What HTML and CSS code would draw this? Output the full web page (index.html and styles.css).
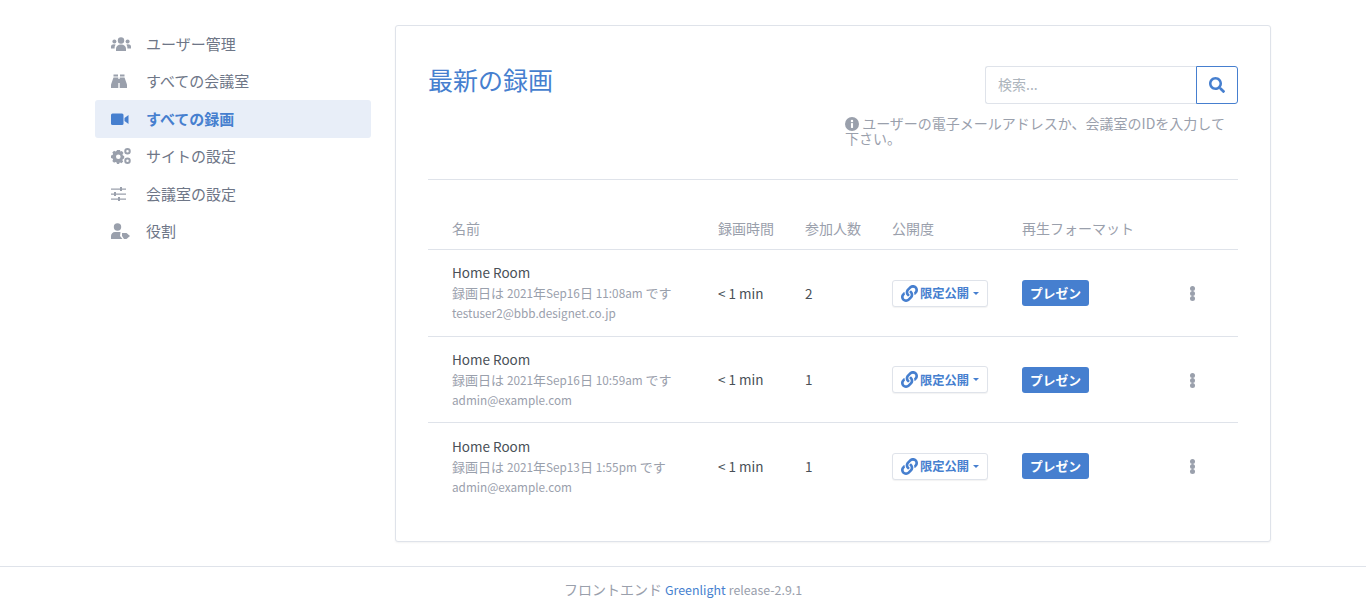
FILE: index.html
```html
<!DOCTYPE html>
<html lang="ja">
<head>
  <meta charset="UTF-8">
  <title>最新の録画</title>
  <link rel="stylesheet" href="styles.css">
</head>
<body>
  <svg class="sprite">
    <symbol id="link-icon" viewBox="0 0 512 512"><path d="M326.600 185.400c59.700 59.800 58.900 155.700.4 214.600l-.4.400-67.200 67.200c-59.300 59.300-155.700 59.300-215 0-59.300-59.300-59.300-155.700 0-215l37.100-37.100c9.800-9.800 26.800-3.300 27.300 10.600.6 17.700 3.800 35.500 9.700 52.700 2 5.800.6 12.300-3.800 16.600l-13.100 13.100c-28 28-28.900 73.700-1.200 102 28 28.500 74 28.700 102.200.5l67.200-67.200c28.200-28.200 28.100-73.800 0-101.800-3.700-3.700-7.400-6.600-10.300-8.600a16 16 0 0 1-6.900-12.600c-.4-10.600 3.400-21.500 11.700-29.800l21.100-21.100c5.500-5.500 14.200-6.200 20.600-1.700a152.500 152.500 0 0 1 20.500 17.200zM467.500 44.400c-59.300-59.300-155.700-59.300-215 0l-67.200 67.200-.4.400c-58.600 58.900-59.400 154.800.4 214.600a152.500 152.500 0 0 0 20.500 17.200c6.400 4.500 15.100 3.800 20.600-1.700l21.100-21.100c8.300-8.300 12.100-19.200 11.700-29.800a16 16 0 0 0-6.900-12.600c-2.900-2-6.600-4.900-10.300-8.600-28.100-28-28.200-73.600 0-101.800l67.200-67.200c28.200-28.200 74.200-28 102.200.5 27.700 28.300 26.800 74-1.200 102l-13.100 13.100c-4.400 4.300-5.800 10.800-3.800 16.600 5.900 17.200 9.100 35 9.700 52.700.5 13.900 17.500 20.400 27.300 10.600l37.100-37.100c59.300-59.300 59.300-155.700 0-215z"/></symbol>
  </svg>

  <div class="page">
    <nav class="sidebar">
      <a class="nav-item">
        <svg class="nav-icon" viewBox="0 0 20 16"><circle cx="10" cy="4.500" r="3.200"/><circle cx="3.400" cy="5.500" r="2"/><circle cx="16.600" cy="5.500" r="2"/><path d="M5 15v-2.500C5 10.500 7 8.500 10 8.500s5 2 5 4V15z"/><path d="M0 12.500v-2c0-1.500 1.500-2.200 3-2.200.8 0 1.300.2 1.800.5C3.900 9.500 3.600 10.500 3.600 12v.5z"/><path d="M20 12.500v-2c0-1.500-1.500-2.200-3-2.200-.8 0-1.300.2-1.800.5.900.7 1.200 1.700 1.200 3.200v.5z"/></svg>
        <span>ユーザー管理</span>
      </a>
      <a class="nav-item">
        <svg class="nav-icon" viewBox="0 0 20 16"><path d="M2.500 1.500H7v2H2.500zM9 1.500h4.500v2H9z"/><path d="M2.500 4.500H7.300V15H0v-3.500z"/><path d="M13.500 4.500H8.700V15H16v-3.500z"/><path d="M7 6h2v4H7z"/></svg>
        <span>すべての会議室</span>
      </a>
      <a class="nav-item active">
        <svg class="nav-icon" viewBox="0 0 20 16"><rect x="0" y="2.500" width="12.500" height="11.500" rx="1.500"/><path d="M13.500 7 17.500 4V13L13.500 10z"/></svg>
        <span>すべての録画</span>
      </a>
      <a class="nav-item">
        <svg class="nav-icon" viewBox="0 0 20 16"><path fill-rule="evenodd" d="M6 2h3l.4 1.500 1.500-.6 1.600 2-1 1.300.4 1.300 1.300.5v2.500l-1.300.5-.5 1.300.8 1.200-1.800 1.800-1.200-.8-1.200.5L8.500 16h-2.500l-.4-1.500-1.300-.5-1.200.8L1.300 13l.8-1.200-.5-1.300L0 10V7.500l1.600-.5.500-1.300-.8-1.200 1.800-1.800 1.200.8 1.200-.5zM7.300 6.500a2.300 2.300 0 1 0 0 4.600 2.300 2.300 0 0 0 0-4.600z"/><path fill-rule="evenodd" d="M16.500 0a3 3 0 1 1 0 6.500 3 3 0 0 1 0-6.500zm0 2a1.200 1.200 0 1 0 0 2.500 1.200 1.200 0 0 0 0-2.500z"/><path fill-rule="evenodd" d="M16.500 9.500a3 3 0 1 1 0 6.500 3 3 0 0 1 0-6.500zm0 2a1.200 1.200 0 1 0 0 2.500 1.200 1.200 0 0 0 0-2.500z"/></svg>
        <span>サイトの設定</span>
      </a>
      <a class="nav-item">
        <svg class="nav-icon" viewBox="0 0 20 16"><path d="M0 2.500h15v1.300H0zM0 7.500h15v1.300H0zM0 12.500h15v1.300H0z"/><path d="M9 1h2v4H9zM3 6h2v4H3zM7 11h2v4H7z"/></svg>
        <span>会議室の設定</span>
      </a>
      <a class="nav-item">
        <svg class="nav-icon" viewBox="0 0 20 16"><circle cx="6.500" cy="4" r="3.700"/><path d="M0 16v-3c0-2.200 1.800-4 4-4h5.500l-.5 4 2.500 3z"/><path d="M11 10h4.500l3.500 3-3.500 3H13l-2-3z"/></svg>
        <span>役割</span>
      </a>
    </nav>

    <main class="card">
      <div class="card-head">
        <h1 class="title">最新の録画</h1>
        <div class="search">
          <div class="search-box">
            <input class="search-input" type="text" placeholder="検索...">
            <button class="search-btn">
              <svg viewBox="0 0 512 512" width="16" height="16"><path fill="#467fcf" d="M505 442.700 405.300 343c-4.500-4.500-10.600-7-17-7H372c27.600-35.300 44-79.700 44-128C416 93.100 322.900 0 208 0S0 93.100 0 208s93.100 208 208 208c48.300 0 92.700-16.400 128-44v16.300c0 6.400 2.500 12.500 7 17l99.700 99.700c9.400 9.400 24.600 9.400 33.900 0l28.300-28.300c9.400-9.400 9.400-24.600.1-34zM208 336c-70.700 0-128-57.200-128-128 0-70.700 57.200-128 128-128 70.700 0 128 57.200 128 128 0 70.700-57.200 128-128 128z"/></svg>
            </button>
          </div>
          <p class="search-note">
            <svg viewBox="0 0 16 16" width="14" height="14"><circle cx="8" cy="8" r="8" fill="#9aa0ac"/><rect x="6.800" y="7" width="2.400" height="5.500" fill="#fff"/><circle cx="8" cy="4.600" r="1.400" fill="#fff"/></svg>
            ユーザーの電子メールアドレスか、会議室のIDを入力して下さい。
          </p>
        </div>
      </div>

      <hr class="divider">

      <table class="recordings">
        <thead>
          <tr>
            <th class="col-name">名前</th>
            <th class="col-time">録画時間</th>
            <th class="col-users">参加人数</th>
            <th class="col-vis">公開度</th>
            <th class="col-format">再生フォーマット</th>
            <th></th>
          </tr>
        </thead>
        <tbody>
          <tr>
            <td class="rec-cell">
              <div class="rec-name">Home Room</div>
              <div class="rec-meta">録画日は <span class="latin">2021</span>年<span class="latin">Sep16</span>日 <span class="latin">11:08am</span> です</div>
              <div class="rec-meta latin">testuser2@bbb.designet.co.jp</div>
            </td>
            <td>&lt; 1 min</td>
            <td>2</td>
            <td><button class="vis-btn"><svg class="link-icon"><use href="#link-icon"/></svg>限定公開<i class="caret"></i></button></td>
            <td><span class="format-btn">プレゼン</span></td>
            <td><i class="kebab"></i></td>
          </tr>
          <tr>
            <td class="rec-cell">
              <div class="rec-name">Home Room</div>
              <div class="rec-meta">録画日は <span class="latin">2021</span>年<span class="latin">Sep16</span>日 <span class="latin">10:59am</span> です</div>
              <div class="rec-meta latin">admin@example.com</div>
            </td>
            <td>&lt; 1 min</td>
            <td>1</td>
            <td><button class="vis-btn"><svg class="link-icon"><use href="#link-icon"/></svg>限定公開<i class="caret"></i></button></td>
            <td><span class="format-btn">プレゼン</span></td>
            <td><i class="kebab"></i></td>
          </tr>
          <tr>
            <td class="rec-cell">
              <div class="rec-name">Home Room</div>
              <div class="rec-meta">録画日は <span class="latin">2021</span>年<span class="latin">Sep13</span>日 <span class="latin">1:55pm</span> です</div>
              <div class="rec-meta latin">admin@example.com</div>
            </td>
            <td>&lt; 1 min</td>
            <td>1</td>
            <td><button class="vis-btn"><svg class="link-icon"><use href="#link-icon"/></svg>限定公開<i class="caret"></i></button></td>
            <td><span class="format-btn">プレゼン</span></td>
            <td><i class="kebab"></i></td>
          </tr>
        </tbody>
      </table>
    </main>
  </div>

  <footer class="footer">
    フロントエンド <a class="footer-link">Greenlight</a> <span class="footer-release">release-2.9.1</span>
  </footer>
</body>
</html>
```

FILE: styles.css
```css
* {
  box-sizing: border-box;
}
body {
  margin: 0;
  background: #fff;
  color: #495057;
  font-family: "Noto Sans CJK JP", "Noto Sans", sans-serif;
  font-size: 14px;
  line-height: 1.5;
}
.sprite {
  display: none;
}
.page {
  display: flex;
  gap: 24px;
  align-items: flex-start;
  width: 1176px;
  margin: 0 0 0 95px;
  padding-top: 25px;
}
.sidebar {
  width: 276px;
  flex: none;
}
.nav-item {
  display: flex;
  align-items: center;
  height: 37.500px;
  padding-left: 16px;
  border-radius: 3px;
  color: #6e7687;
  font-size: 15px;
}
.nav-item.active {
  background: #e8eef8;
  color: #467fcf;
  font-weight: 700;
}
.nav-icon {
  width: 20px;
  height: 16px;
  margin-right: 15px;
  fill: #9aa0ac;
  flex: none;
}
.active .nav-icon {
  fill: #467fcf;
}
.card {
  width: 876px;
  height: 517px;
  padding: 32px;
  background: #fff;
  border: 1px solid #dfe3ea;
  border-radius: 3px;
  box-shadow: 0 1px 2px rgba(0,0,0,0.05);
}
.card-head {
  display: flex;
  justify-content: space-between;
  height: 89px;
}
.title {
  margin: 4px 0 0;
  color: #467fcf;
  font-size: 25px;
  font-weight: 400;
  line-height: 34px;
}
.search {
  width: 393px;
  margin-top: 8px;
}
.search-box {
  display: flex;
  width: 253px;
  height: 38px;
  margin-left: 140px;
}
.search-input {
  flex: 1;
  min-width: 0;
  padding: 0 12px 2px;
  border: 1px solid #dfe3ea;
  border-right: none;
  border-radius: 3px 0 0 3px;
  font: inherit;
  outline: none;
}
.search-input::placeholder {
  color: #adb5bd;
}
.search-btn {
  display: flex;
  align-items: center;
  justify-content: center;
  width: 42px;
  padding: 0;
  background: #fff;
  border: 1px solid #467fcf;
  border-radius: 0 3px 3px 0;
}
.search-note {
  margin: 12px 0 0;
  color: #9aa0ac;
  font-size: 14px;
  line-height: 15px;
}
.search-note svg {
  vertical-align: -2px;
}
.divider {
  height: 1px;
  margin: 32px 0 28px;
  background: #dfe3ea;
  border: none;
}
.recordings {
  width: 100%;
  border-collapse: collapse;
  table-layout: fixed;
}
.recordings th {
  height: 41px;
  padding: 0;
  border-bottom: 1px solid #dfe3ea;
  color: #9aa0ac;
  font-weight: 400;
  text-align: left;
}
.recordings th.col-name {
  padding-left: 24px;
  width: 290px;
}
.col-time,
.col-users {
  width: 87px;
}
.col-vis {
  width: 130px;
}
.col-format {
  width: 168px;
}
.recordings td {
  height: 86px;
  padding: 1px 0 0;
  border-bottom: 1px solid #dfe3ea;
  color: #495057;
  font-size: 13.500px;
}
.recordings tbody tr:first-child td {
  height: 87px;
}
.recordings tbody tr:last-child td {
  height: 87px;
  border-bottom: none;
}
.recordings td.rec-cell {
  padding: 0 0 0 24px;
}
.recordings tbody tr:last-child td.rec-cell {
  padding-top: 2px;
}
.rec-name {
  line-height: 21px;
}
.rec-meta {
  color: #9aa0ac;
  font-size: 13px;
  line-height: 20px;
}
.latin {
  font-size: 11.750px;
}
.vis-btn {
  display: inline-flex;
  align-items: center;
  height: 27px;
  padding: 0 8px;
  background: #fff;
  border: 1px solid #dfe3ea;
  border-radius: 3px;
  box-shadow: 0 1px 1px rgba(0,0,0,0.05);
  color: #467fcf;
  font: 700 12.250px "Noto Sans CJK JP", sans-serif;
  white-space: nowrap;
}
.link-icon {
  width: 17px;
  height: 17px;
  margin-right: 2px;
  fill: #467fcf;
}
.caret {
  margin-left: 4px;
  border-top: 3px solid #467fcf;
  border-left: 3px solid transparent;
  border-right: 3px solid transparent;
}
.format-btn {
  display: inline-block;
  height: 26px;
  padding: 0 8px;
  background: #467fcf;
  border-radius: 3px;
  color: #fff;
  font-size: 12.750px;
  font-weight: 700;
  line-height: 26px;
}
.kebab {
  display: block;
  width: 5px;
  height: 5px;
  margin-top: 1px;
  background: #9aa0ac;
  border-radius: 50%;
  box-shadow: 0 -5px 0 #9aa0ac, 0 5px 0 #9aa0ac;
}
.footer {
  margin-top: 24px;
  height: 49px;
  border-top: 1px solid #dfe3ea;
  color: #9aa0ac;
  font-size: 14px;
  line-height: 45px;
  text-align: center;
}
.footer-link {
  color: #467fcf;
  font-size: 12.400px;
}
.footer-release {
  font-size: 12.400px;
}
```
